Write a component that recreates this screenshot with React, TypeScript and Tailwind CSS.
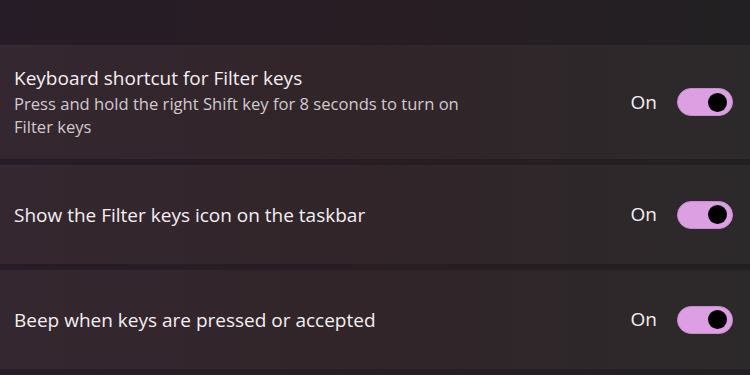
import React from 'react';

interface SettingRowProps {
  title: string;
  description?: string;
  heightClass: string;
}

function Toggle() {
  return (
    <div className="flex h-[28px] w-[56px] items-center justify-end rounded-full border border-[#c58bcc] bg-[#dc9fe2] pr-[5px]">
      <div className="h-[19px] w-[19px] rounded-full bg-black" />
    </div>
  );
}

function SettingRow({ title, description, heightClass }: SettingRowProps) {
  return (
    <div
      className={`flex ${heightClass} items-center justify-between bg-gradient-to-r from-[#34272f] via-[#312529] to-[#2c292b] pl-[14px] pr-[17px]`}
    >
      <div className="max-w-[470px]">
        <div className="text-[19px] leading-[24px] text-[#f3eff2]">{title}</div>
        {description && (
          <div className="mt-[2px] text-[16.6px] leading-[23px] text-[#d2cacf]">{description}</div>
        )}
      </div>
      <div className="flex items-center gap-[20px]">
        <span className="text-[19px] text-[#f3eff2]">On</span>
        <Toggle />
      </div>
    </div>
  );
}

export default function App() {
  return (
    <div
      className="flex h-[375px] w-[750px] flex-col gap-[6px] overflow-hidden bg-gradient-to-r from-[#261c27] via-[#281d23] to-[#222022] pt-[45px]"
      style={{ fontFamily: '"Open Sans", sans-serif' }}
    >
      <SettingRow
        heightClass="h-[114px]"
        title="Keyboard shortcut for Filter keys"
        description="Press and hold the right Shift key for 8 seconds to turn on Filter keys"
      />
      <SettingRow heightClass="h-[99px]" title="Show the Filter keys icon on the taskbar" />
      <SettingRow heightClass="h-[99px]" title="Beep when keys are pressed or accepted" />
    </div>
  );
}
